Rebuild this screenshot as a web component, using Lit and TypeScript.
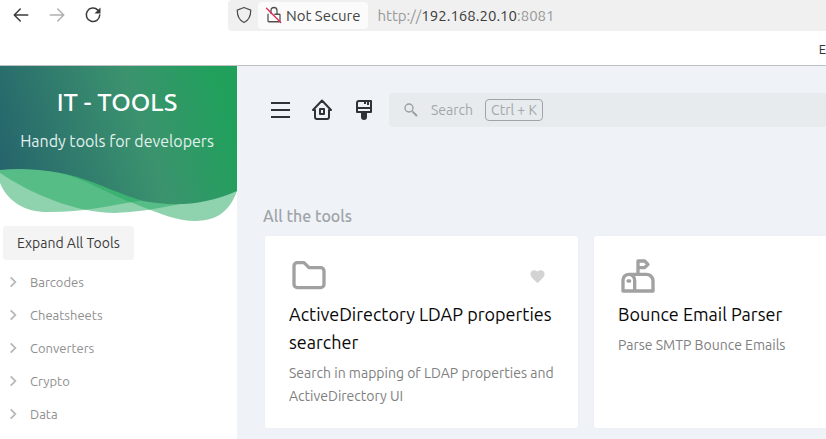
import { LitElement, html, css, svg } from "lit";
import { customElement, property } from "lit/decorators.js";

const folderIcon = svg`<path d="M5 4h4l3 3h7a2 2 0 0 1 2 2v8a2 2 0 0 1-2 2H5a2 2 0 0 1-2-2V6a2 2 0 0 1 2-2"/>`;
const mailboxIcon = svg`<path d="M10 21v-6.500a3.500 3.500 0 0 0-7 0V21h18v-6a4 4 0 0 0-4-4H6.500"/><path d="M12 11V3h4l2 2-2 2h-4"/><path d="M6 15h1"/>`;

@customElement("tool-card")
class ToolCard extends LitElement {
  @property() name = "";
  @property() summary = "";
  @property({ attribute: false }) icon: unknown = null;
  @property({ type: Boolean }) favorite = false;

  static styles = css`
    :host { display: block; background: #fff; border-radius: 3px; padding: 20px 24px; box-sizing: border-box; box-shadow: 0 0 2px #e8ecf1; }
    .top { display: flex; align-items: center; justify-content: space-between; height: 40px; }
    .icon { width: 40px; height: 40px; fill: none; stroke: #a1a1a1; stroke-width: 2; stroke-linecap: round; stroke-linejoin: round; }
    .fav { border: 0; background: none; padding: 0 8px; display: flex; }
    .fav svg { width: 17px; height: 17px; fill: #d3d3d3; }
    h3 { margin: 4px 0 6px; font-size: 18px; line-height: 28px; font-weight: 400; color: #080808; }
    p { margin: 0; font-size: 14px; line-height: 23px; color: #808080; }
  `;

  render() {
    return html`
      <div class="top">
        <svg class="icon" viewBox="0 0 24 24">${this.icon}</svg>
        ${this.favorite
          ? html`<button class="fav" aria-label="Add to favorites">
              <svg viewBox="0 0 24 24"><path d="m12 21.300-1.400-1.300C5.400 15.300 2 12.300 2 8.500 2 5.400 4.400 3 7.500 3c1.700 0 3.400.8 4.500 2.100C13.100 3.800 14.800 3 16.500 3 19.600 3 22 5.400 22 8.500c0 3.800-3.400 6.800-8.600 11.500z"/></svg>
            </button>`
          : ""}
      </div>
      <h3>${this.name}</h3>
      <p>${this.summary}</p>
    `;
  }
}

@customElement("browser-bar")
class BrowserBar extends LitElement {
  static styles = css`
    :host { display: block; background: #fff; border-bottom: 1px solid #bfc3c6; overflow: hidden; }
    .nav { display: flex; height: 31px; }
    .history, .address { padding-bottom: 1px; box-sizing: border-box; }
    .history { flex: none; width: 228px; padding-left: 12px; display: flex; align-items: center; gap: 18px; }
    button { border: 0; padding: 0; background: none; display: flex; align-items: center; font: inherit; color: inherit; }
    svg { width: 18px; height: 18px; fill: none; stroke: #3b3b3b; stroke-width: 2; stroke-linecap: round; stroke-linejoin: round; flex: none; }
    .dim svg { stroke: #b0b0b0; }
    .solid { fill: #3b3b3b; stroke: none; }
    .address { flex: 1; display: flex; align-items: center; background: #f0f0f0; border-radius: 4px 0 0 4px; padding-left: 7px; font-size: 15px; color: #444; }
    .address svg { stroke-width: 1.7; stroke: #505050; }
    .secure { background: #fbfbfb; height: 27px; margin-left: 5px; padding: 0 8px 0 7px; gap: 3px; border-radius: 4px; }
    .address .slash { stroke: #e22850; }
    .url { margin-left: 9px; color: #999; }
    .url b { font-weight: 400; color: #3b3b3b; }
    .bookmarks { height: 34px; display: flex; justify-content: flex-end; align-items: center; }
    .bookmarks a { font-size: 13px; line-height: 20px; margin-top: 2px; color: #333; text-decoration: none; }
  `;

  render() {
    return html`
      <div class="nav">
        <div class="history">
          <button aria-label="Back"><svg viewBox="0 0 24 24"><path d="M21 12H3m8-8-8 8 8 8"/></svg></button>
          <button class="dim" aria-label="Forward"><svg viewBox="0 0 24 24"><path d="M3 12h18m-8-8 8 8-8 8"/></svg></button>
          <button aria-label="Reload"><svg viewBox="0 0 24 24"><path d="M18.500 5.500A9 9 0 1 0 21 12"/><path class="solid" d="M22 2v8h-8z"/></svg></button>
        </div>
        <div class="address">
          <svg viewBox="0 0 24 24"><path d="M12 2 21 5.500c0 8-2 13-9 16.500C5 18.500 3 13.500 3 5.500z"/></svg>
          <button class="secure">
            <svg viewBox="0 0 24 24"><path d="M8 10V6a4 4 0 0 1 8 0v5M4 11v9a1 1 0 0 0 1 1h14a1 1 0 0 0 1-1v-8a1 1 0 0 0-1-1h-6"/><path class="slash" d="m2 3 19 19"/></svg>
            <span>Not Secure</span>
          </button>
          <span class="url">http://<b>192.168.20.10</b>:8081</span>
        </div>
      </div>
      <div class="bookmarks"><a href="#">E</a></div>
    `;
  }
}

@customElement("side-menu")
class SideMenu extends LitElement {
  private groups = ["Barcodes", "Cheatsheets", "Converters", "Crypto", "Data"];

  static styles = css`
    :host { display: block; background: #fff; }
    .hero { display: grid; }
    .hero > * { grid-area: 1 / 1; }
    .waves { width: 100%; display: block; }
    .title { text-align: center; color: #fff; padding: 20px 3px 0 0; z-index: 1; }
    h1 { margin: 0; font-size: 25px; line-height: 32px; font-weight: 500; }
    .title p { margin: 10px 0 0; font-size: 16px; line-height: 26px; color: #e2f1ec; }
    .expand { display: block; margin: 5px 0 5px 3px; height: 34px; padding: 0 14px; border: 0; border-radius: 3px; background: #f4f4f5; color: #3b3b3b; font: inherit; font-size: 14px; }
    ul { margin: 0; padding: 0; list-style: none; }
    .group { width: 100%; height: 33px; border: 0; background: none; padding: 0 0 0 6px; display: flex; align-items: center; gap: 10px; font: inherit; font-size: 13px; color: #8f8f8f; }
    .group svg { width: 14px; height: 14px; fill: none; stroke: #b5b5b5; stroke-width: 3; }
  `;

  render() {
    return html`
      <header class="hero">
        <svg class="waves" viewBox="0 0 237 155">
          <defs>
            <linearGradient id="sea" gradientUnits="userSpaceOnUse" x1="0" y1="115" x2="225" y2="45">
              <stop offset="0" stop-color="#25636c"/>
              <stop offset="0.650" stop-color="#3b936e"/>
              <stop offset="1" stop-color="#21a05c"/>
            </linearGradient>
          </defs>
          <g fill="#1fa75d" fill-opacity="0.500">
            <path d="M0 90V117C8 137 28 147 50 146C83 146 108 140 133 136C165 130 190 128 200 120V90Z"/>
            <path d="M0 90V107C30 127 75 147 115 147C155 145 185 137 237 125V90Z"/>
            <path d="M50 90V104C85 112 112 130 133 137C160 148 178 155 195 155C221 155 231 141 237 125V90Z"/>
          </g>
          <path fill="url(#sea)" d="M0 0H237V125C205 139 175 141 143 135C122 129 100 118 77 111C60 106 30 101 0 104Z"/>
        </svg>
        <div class="title"><h1>IT - TOOLS</h1><p>Handy tools for developers</p></div>
      </header>
      <button class="expand">Expand All Tools</button>
      <ul>
        ${this.groups.map((g) => html`<li><button class="group"><svg viewBox="0 0 24 24"><path d="m8 4 8 8-8 8"/></svg>${g}</button></li>`)}
      </ul>
    `;
  }
}

@customElement("app-root")
class AppRoot extends LitElement {
  static styles = css`
    :host { display: flex; flex-direction: column; min-height: 100vh; overflow: hidden; background: #eff3f8; font-family: Ubuntu, "Noto Sans", sans-serif; }
    .body { flex: 1; display: grid; grid-template-columns: 237px minmax(0, 1fr); }
    main { padding: 27px 0 12px 26px; overflow: hidden; }
    .bar { display: flex; align-items: center; height: 34px; padding-left: 5px; }
    .tool { border: 0; background: none; padding: 0; margin-right: 18px; display: flex; }
    .tool svg { width: 24px; height: 24px; fill: none; stroke: #2e3338; stroke-width: 2; stroke-linejoin: round; }
    .tool:nth-child(3) { margin-right: 13px; }
    .tool .solid { fill: #2e3338; }
    .search { flex: 1; align-self: stretch; border: 0; border-radius: 4px 0 0 4px; background: #e7ebee; display: flex; align-items: center; padding: 0 0 0 14px; font: inherit; font-size: 14px; color: #a3a7aa; }
    .search svg { width: 16px; height: 16px; fill: none; stroke: #999da1; stroke-width: 2; margin-right: 12px; }
    kbd { font: inherit; border: 1px solid #a0a4a7; border-radius: 4px; padding: 0 5px; line-height: 20px; margin-left: 12px; }
    h2 { margin: 76px 0 7px; font-size: 16px; line-height: 26px; font-weight: 500; color: #a0a3a6; }
    .cards { display: grid; grid-template-columns: repeat(2, 313px); gap: 16px; margin-left: 2px; }
  `;

  render() {
    return html`
      <browser-bar></browser-bar>
      <div class="body">
        <side-menu></side-menu>
        <main>
          <div class="bar">
            <button class="tool" aria-label="Toggle menu"><svg viewBox="0 0 24 24"><path d="M3 5h19M3 12h19M3 19h19"/></svg></button>
            <button class="tool" aria-label="Home"><svg viewBox="0 0 24 24"><path d="M5 12H3l9-9.500 9 9.500h-2v7a2 2 0 0 1-2 2H7a2 2 0 0 1-2-2z"/><path d="M10 11h4v5h-4z"/></svg></button>
            <button class="tool" aria-label="Theme"><svg viewBox="0 0 24 24"><path d="M5 14V5a2 2 0 0 1 2-2h12v11zM5 10h14M13 3v3M16 3v4"/><path class="solid" d="M10 15h4v4a2 2 0 0 1-4 0z"/></svg></button>
            <button class="search"><svg viewBox="0 0 24 24"><circle cx="9" cy="9" r="6"/><path stroke-width="3" d="m14 14 7 7"/></svg>Search<kbd>Ctrl + K</kbd></button>
          </div>
          <h2>All the tools</h2>
          <div class="cards">
            <tool-card favorite .icon=${folderIcon} name="ActiveDirectory LDAP properties searcher" summary="Search in mapping of LDAP properties and ActiveDirectory UI"></tool-card>
            <tool-card .icon=${mailboxIcon} name="Bounce Email Parser" summary="Parse SMTP Bounce Emails"></tool-card>
          </div>
        </main>
      </div>
    `;
  }
}
